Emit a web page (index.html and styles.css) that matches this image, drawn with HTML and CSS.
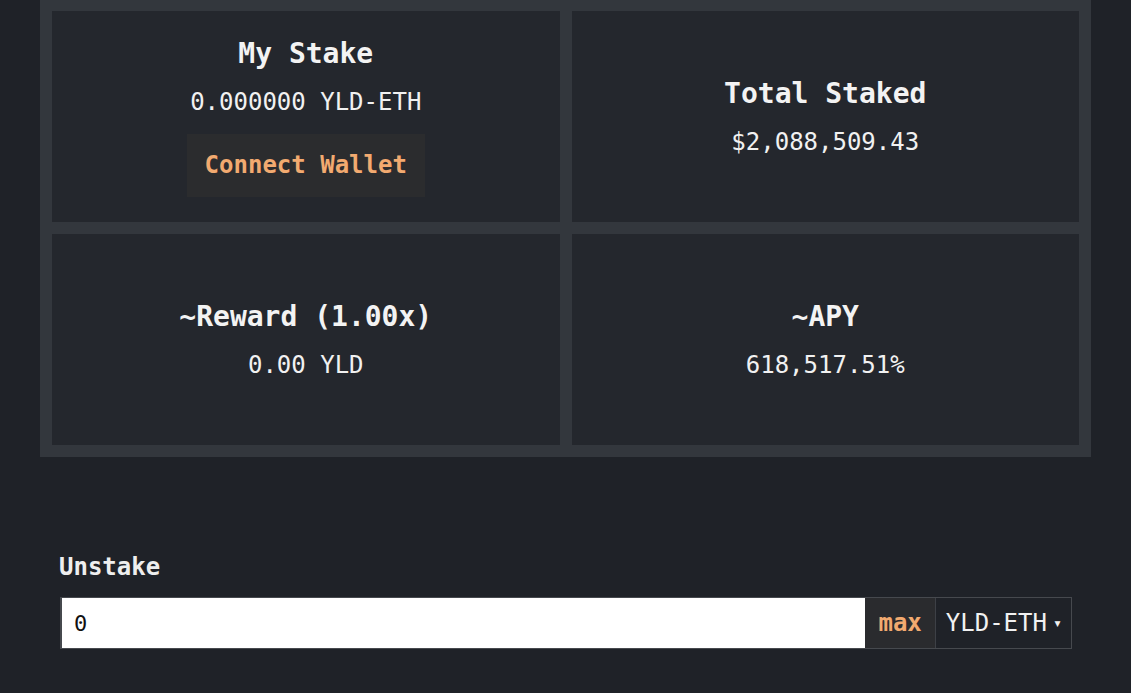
FILE: index.html
```html
<!DOCTYPE html>
<html lang="en">
<head>
<meta charset="utf-8">
<title>Stake</title>
<link rel="stylesheet" href="styles.css">
</head>
<body>
<main class="page">
  <section class="stats">
    <div class="stat">
      <h2 class="stat-title">My Stake</h2>
      <p class="stat-value">0.000000 YLD-ETH</p>
      <button class="connect-btn" type="button">Connect Wallet</button>
    </div>
    <div class="stat">
      <h2 class="stat-title">Total Staked</h2>
      <p class="stat-value">$2,088,509.43</p>
    </div>
    <div class="stat">
      <h2 class="stat-title">~Reward (1.00x)</h2>
      <p class="stat-value">0.00 YLD</p>
    </div>
    <div class="stat">
      <h2 class="stat-title">~APY</h2>
      <p class="stat-value">618,517.51%</p>
    </div>
  </section>

  <form class="unstake">
    <label class="unstake-label" for="amount">Unstake</label>
    <div class="amount-group">
      <input class="amount-input" id="amount" type="text" value="0">
      <button class="max-btn" type="button">max</button>
      <div class="token-select">
        <span>YLD-ETH</span>
        <span class="caret">&#9662;</span>
      </div>
    </div>
  </form>
</main>
</body>
</html>
```

FILE: styles.css
```css
html, body {
  margin: 0;
  padding: 0;
  background: #1f2228;
  color: #f1f1f1;
  font-family: "DejaVu Sans Mono", "Liberation Mono", monospace;
}

.page {
  padding: 0 40px;
  margin-top: -1px;
}

.stats {
  display: grid;
  grid-template-columns: 1fr 1fr;
  gap: 12px;
  padding: 12px;
  background: #33373d;
}

.stat {
  min-height: 211px;
  background: #24272d;
  display: flex;
  flex-direction: column;
  align-items: center;
  justify-content: center;
}

.stat-title {
  margin: 0 0 17px;
  font-size: 28px;
  line-height: 34px;
  font-weight: bold;
  color: #f3f3f3;
}

.stat-value {
  margin: 0;
  font-size: 24px;
  line-height: 29px;
  color: #f1f1f1;
}

.connect-btn {
  margin-top: 17px;
  padding: 17px 18px;
  border: none;
  background: #2b2c2e;
  color: #f2aa70;
  font-family: inherit;
  font-size: 24px;
  line-height: 29px;
  font-weight: bold;
}

.unstake {
  padding: 96px 20px 0;
}

.unstake-label {
  display: block;
  font-size: 24px;
  line-height: 29px;
  font-weight: bold;
  color: #eeeeee;
  margin-bottom: 15px;
  margin-left: -1px;
}

.amount-group {
  display: flex;
  height: 52px;
  margin-right: -1px;
  border: 1px solid #46494e;
  box-sizing: border-box;
}

.amount-input {
  flex: 1;
  min-width: 0;
  border: none;
  border-left: 1px solid #46494e;
  margin: 0;
  padding: 0 12px;
  background: #ffffff;
  color: #111111;
  font-family: inherit;
  font-size: 22px;
  outline: none;
}

.max-btn {
  border: none;
  border-right: 1px solid #3d4046;
  background: #2a2b2e;
  color: #f2aa70;
  font-family: inherit;
  font-size: 24px;
  font-weight: bold;
  padding: 0 13px;
  margin: 0;
}

.token-select {
  display: flex;
  align-items: center;
  gap: 6px;
  padding: 0 9px 0 10px;
  background: #1f2228;
  font-size: 24px;
  color: #f1f1f1;
}

.caret {
  font-size: 15px;
}
```
